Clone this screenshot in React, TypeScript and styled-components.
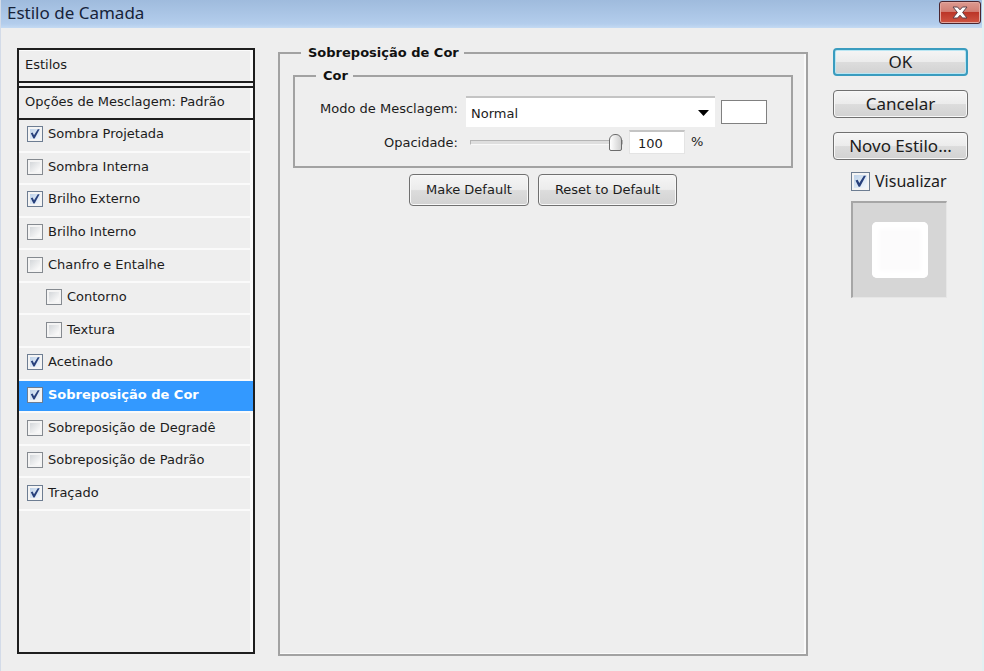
import React, { useState } from "react";
import styled, { createGlobalStyle, css } from "styled-components";

const GlobalStyle = createGlobalStyle`
  *, *::before, *::after { box-sizing: border-box; }
  body {
    margin: 0;
    background: #eeeeee;
    color: #1c1c1c;
    font: 13px/20px "DejaVu Sans", Verdana, sans-serif;
  }
  button, input, select { font: inherit; color: inherit; margin: 0; }
`;

const Dialog = styled.main`
  display: flex;
  flex-direction: column;
  min-height: 100vh;
  border-left: 1px solid #d3dbe8;
  border-right: 2px solid #e2f1f2;
`;

const TitleBar = styled.header`
  display: flex;
  align-items: flex-start;
  justify-content: space-between;
  height: 28px;
  padding: 0 1px 0 6px;
  background: linear-gradient(#9fbbdd, #b3cdec 85%, #c4daf3);
`;

const Title = styled.h1`
  margin: 0;
  font: 17px/26px "Noto Sans", "Segoe UI", sans-serif;
  color: #17233a;
`;

const CloseButton = styled.button`
  display: grid;
  place-items: center;
  width: 42px;
  height: 23px;
  margin-top: 1px;
  padding: 0;
  border: 1px solid #4a2630;
  border-radius: 3px;
  background: linear-gradient(#dd9a90 0%, #d27f74 45%, #bc3628 50%, #cf5543 100%);
  box-shadow: inset 0 0 0 1px #e4a79f;
`;

const Content = styled.div`
  flex: 1;
  display: flex;
  align-items: stretch;
  padding: 15px 14px 15px 16px;
`;

const Sidebar = styled.nav`
  flex: 0 0 238px;
  margin: 5px 23px 2px 0;
  border: 2px solid #1e1e1e;
  box-shadow: inset -3px 0 0 #fbfbfb;
`;

const SidebarHeading = styled.h2`
  margin: 0;
  padding: 4px 6px 5px;
  height: 31px;
  font-size: 13px;
  line-height: 20px;
  font-weight: normal;
  border-top: 1px solid #fbfbfb;
`;

const DoubleRule = styled.hr`
  margin: 0;
  height: 7px;
  border: solid #1e1e1e;
  border-width: 2px 0;
  background: #f4f4f4;
`;

const BlendingOptions = styled(SidebarHeading)`
  height: 32px;
  border-top: 0;
  border-bottom: 2px solid #1e1e1e;
`;

const StyleList = styled.ul`
  display: grid;
  grid-auto-rows: 1fr;
  height: 391px;
  margin: 0;
  padding: 0;
  list-style: none;
`;

const StyleRow = styled.li<{ $nested?: boolean; $selected?: boolean }>`
  display: flex;
  align-items: center;
  padding: 0 0 2px ${(p) => (p.$nested ? 27 : 8)}px;
  border-bottom: 2px solid #fafafa;
  ${(p) =>
    p.$selected &&
    css`
      background: #3399ff;
      background-clip: padding-box;
      color: #ffffff;
      font-weight: bold;
    `}
`;

const CheckLabel = styled.label<{ $large?: boolean }>`
  display: flex;
  align-items: center;
  gap: 5px;
  white-space: nowrap;
  ${(p) =>
    p.$large &&
    css`
      font: 16px/22px "Noto Sans", Tahoma, sans-serif;
    `}
`;

const CheckMark = styled.span<{ $large?: boolean }>`
  display: grid;
  flex: none;
  width: ${(p) => (p.$large ? 19 : 16)}px;
  height: ${(p) => (p.$large ? 19 : 16)}px;

  > * { grid-area: 1 / 1; width: 100%; height: 100%; }

  input {
    appearance: none;
    border: 1px solid #858a90;
    background: linear-gradient(135deg, #cbcfd3, #f8f8f8 75%);
    box-shadow: inset 0 0 0 2px #f4f4f4;
  }
  input:checked {
    border-color: #6d7d92;
    background: linear-gradient(135deg, #b4cbe6, #eef4fb 80%);
  }
  svg { pointer-events: none; visibility: hidden; }
  input:checked + svg { visibility: visible; }
`;

const Settings = styled.fieldset`
  flex: 1;
  min-width: 0;
  margin: 0 25px 0 0;
  padding: 3px 13px 12px;
  border: 2px solid #a2a2a2;
  box-shadow: inset -2px -1px 0 #fafafa;
`;

const Group = styled.fieldset`
  display: grid;
  row-gap: 3px;
  margin: 0;
  padding: 10px 24px 12px 0;
  border: 2px solid #a2a2a2;
`;

const Legend = styled.legend`
  margin-left: 21px;
  padding: 0 5px 0 7px;
  font-weight: bold;
  color: #111111;
  background: #eeeeee;
`;

const PanelLegend = styled(Legend)`
  margin-left: 8px;
`;

const Field = styled.div`
  display: grid;
  grid-template-columns: 163px 1fr;
  column-gap: 8px;
  align-items: start;
`;

const FieldLabel = styled.label`
  padding-top: 3px;
  text-align: right;
  white-space: nowrap;
`;

const FieldBody = styled.div`
  display: flex;
  align-items: center;
  gap: 6px;
`;

const SelectBox = styled.div`
  flex: 1;
  display: grid;
  align-items: center;
  height: 31px;
  > * { grid-area: 1 / 1; }
  svg { justify-self: end; margin: 2px 6px 0 0; pointer-events: none; }
`;

const Select = styled.select`
  appearance: none;
  width: 100%;
  height: 31px;
  padding: 2px 20px 0 5px;
  border: 0;
  border-top: 2px solid #c4c4c4;
  border-radius: 0;
  background: #ffffff;
`;

const Swatch = styled.button`
  width: 46px;
  height: 24px;
  padding: 0;
  border: 1px solid #808080;
  background: #ffffff;
`;

const Slider = styled.input`
  appearance: none;
  width: 157px;
  height: 20px;
  padding-left: 4px;
  background: none;

  &::-webkit-slider-runnable-track {
    height: 5px;
    border: 1px solid #b4b4b4;
    border-bottom-color: #f8f8f8;
    background: #dedede;
  }
  &::-webkit-slider-thumb {
    appearance: none;
    width: 13px;
    height: 17px;
    margin-top: -7px;
    border: 1px solid #6c6c6c;
    border-radius: 6px 6px 2px 2px;
    background: linear-gradient(90deg, #ffffff, #cfcfcf);
  }
`;

const NumberBox = styled.input`
  width: 56px;
  height: 24px;
  padding: 1px 8px 0;
  border: 1px solid #e4e4e4;
  border-top: 2px solid #c4c4c4;
  background: #ffffff;
`;

const DefaultButtons = styled.div`
  display: flex;
  justify-content: center;
  gap: 9px;
  margin-top: 6px;
`;

const Button = styled.button<{ $primary?: boolean }>`
  height: 28px;
  padding: 0 4px;
  border: ${(p) => (p.$primary ? "2px solid #3a9cbf" : "1px solid #707070")};
  border-radius: 4px;
  background: linear-gradient(#f5f5f5 0%, #ececec 48%, #dcdcdc 52%, #d2d2d2 100%);
  box-shadow: inset 0 0 0 1px ${(p) => (p.$primary ? "#b9e6f3" : "#f8f8f8")};
  font: 17px/20px "Noto Sans", Tahoma, sans-serif;
  white-space: nowrap;
`;

const DefaultButton = styled(Button)`
  height: 32px;
  padding: 0 16px;
  font: inherit;
`;

const Actions = styled.aside`
  flex: 0 0 135px;
  display: flex;
  flex-direction: column;
  gap: 14px;
  padding-top: 5px;
`;

const PreviewBlock = styled.div`
  display: flex;
  flex-direction: column;
  gap: 9px;
  width: 96px;
  margin: -4px auto 0 18px;
`;

const Preview = styled.div`
  display: grid;
  place-items: center;
  height: 97px;
  border: 1px solid #e6e6e6;
  border-top: 2px solid #a6a6a6;
  border-left: 2px solid #a6a6a6;
  background: #d6d6d6;
`;

const PreviewShape = styled.div`
  width: 56px;
  height: 56px;
  border-radius: 5px;
  background: #fcfbfc;
  box-shadow: inset 0 0 4px 7px #ffffff;
`;

type StyleItem = { name: string; on: boolean; nested?: boolean };

const initialStyles: StyleItem[] = [
  { name: "Sombra Projetada", on: true },
  { name: "Sombra Interna", on: false },
  { name: "Brilho Externo", on: true },
  { name: "Brilho Interno", on: false },
  { name: "Chanfro e Entalhe", on: false },
  { name: "Contorno", on: false, nested: true },
  { name: "Textura", on: false, nested: true },
  { name: "Acetinado", on: true },
  { name: "Sobreposição de Cor", on: true },
  { name: "Sobreposição de Degradê", on: false },
  { name: "Sobreposição de Padrão", on: false },
  { name: "Traçado", on: true },
];

function CheckBox({ label, initial, large }: { label: string; initial: boolean; large?: boolean }) {
  const [on, setOn] = useState(initial);
  return (
    <CheckLabel $large={large}>
      <CheckMark $large={large}>
        <input type="checkbox" checked={on} onChange={(e) => setOn(e.target.checked)} />
        <svg viewBox="0 0 16 16" aria-hidden="true">
          <path d="M3.8 7.2 5.6 6.6 7 9.2 10.8 3.2 12.6 3.2 7.6 12.4 6.4 12.4Z" fill="#27407c" />
        </svg>
      </CheckMark>
      {label}
    </CheckLabel>
  );
}

export default function App() {
  const [opacity, setOpacity] = useState("100");
  return (
    <>
      <GlobalStyle />
      <Dialog>
        <TitleBar>
          <Title>Estilo de Camada</Title>
          <CloseButton type="button" aria-label="Fechar">
            <svg width="18" height="13" viewBox="0 0 18 13" aria-hidden="true">
              <path
                d="M2 1H6.5L9 3.8 11.5 1H16L11.6 6.5 16 12H11.5L9 9.2 6.5 12H2L6.4 6.5Z"
                fill="#ffffff"
                stroke="#5c4048"
                strokeWidth="1"
              />
            </svg>
          </CloseButton>
        </TitleBar>
        <Content>
          <Sidebar>
            <SidebarHeading>Estilos</SidebarHeading>
            <DoubleRule />
            <BlendingOptions>Opções de Mesclagem: Padrão</BlendingOptions>
            <StyleList>
              {initialStyles.map((s) => (
                <StyleRow key={s.name} $nested={s.nested} $selected={s.name === "Sobreposição de Cor"}>
                  <CheckBox label={s.name} initial={s.on} />
                </StyleRow>
              ))}
            </StyleList>
          </Sidebar>
          <Settings>
            <PanelLegend>Sobreposição de Cor</PanelLegend>
            <Group>
              <Legend>Cor</Legend>
              <Field>
                <FieldLabel htmlFor="mode">Modo de Mesclagem:</FieldLabel>
                <FieldBody>
                  <SelectBox>
                    <Select id="mode" defaultValue="Normal">
                      <option>Normal</option>
                    </Select>
                    <svg width="11" height="6" viewBox="0 0 11 6" aria-hidden="true">
                      <path d="M0 0H11L5.5 6Z" fill="#000000" />
                    </svg>
                  </SelectBox>
                  <Swatch type="button" aria-label="Definir cor" />
                </FieldBody>
              </Field>
              <Field>
                <FieldLabel htmlFor="opacity">Opacidade:</FieldLabel>
                <FieldBody>
                  <Slider
                    id="opacity"
                    type="range"
                    min="0"
                    max="100"
                    value={opacity}
                    onChange={(e) => setOpacity(e.target.value)}
                  />
                  <NumberBox
                    aria-label="Opacidade em porcentagem"
                    value={opacity}
                    onChange={(e) => setOpacity(e.target.value)}
                  />
                  <span>%</span>
                </FieldBody>
              </Field>
            </Group>
            <DefaultButtons>
              <DefaultButton type="button">Make Default</DefaultButton>
              <DefaultButton type="button">Reset to Default</DefaultButton>
            </DefaultButtons>
          </Settings>
          <Actions>
            <Button type="button" $primary>OK</Button>
            <Button type="button">Cancelar</Button>
            <Button type="button">Novo Estilo...</Button>
            <PreviewBlock>
              <CheckBox label="Visualizar" initial large />
              <Preview>
                <PreviewShape />
              </Preview>
            </PreviewBlock>
          </Actions>
        </Content>
      </Dialog>
    </>
  );
}
